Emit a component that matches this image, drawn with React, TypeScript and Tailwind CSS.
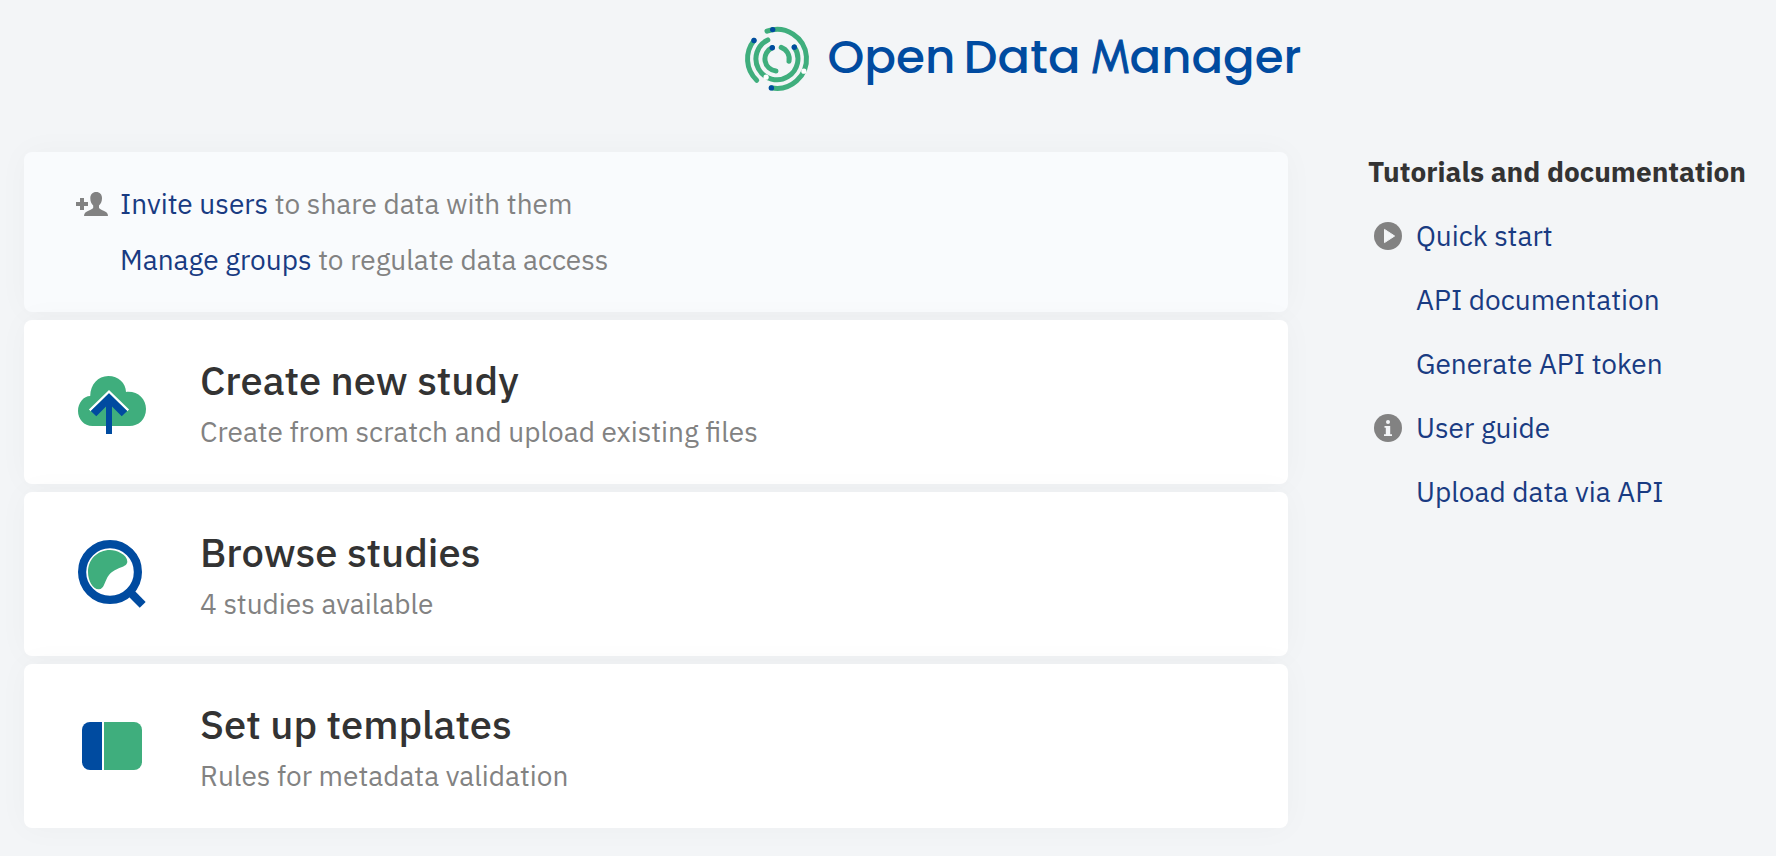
import type { ReactNode } from "react";

const arcs = [
  "M37 21.1A29.5 29.5 0 1 1 41.3 77.8",
  "M24 30.5A29.5 29.5 0 0 0 26.7 70.3",
  "M37.8 29.9A21 21 0 1 0 64.3 37",
  "M42.3 37.6A12.3 12.3 0 0 0 46 61.1",
  "M51.2 37.3A12.3 12.3 0 0 1 59 51.3",
];

function Logo() {
  return (
    <svg width="600" height="100" viewBox="0 0 600 100" aria-label="Open Data Manager">
      <g fill="none" stroke="#3fae7d" strokeWidth="5" strokeLinecap="round">
        {arcs.map((d) => (
          <path key={d} d={d} />
        ))}
      </g>
      <g fill="#004ba0">
        <circle cx="42.7" cy="19.6" r="2.7" />
        <circle cx="24" cy="30.5" r="2.7" />
        <circle cx="42.3" cy="37.7" r="2.7" />
        <circle cx="64.3" cy="37.2" r="2.7" />
        <circle cx="41.4" cy="77.9" r="2.7" />
      </g>
      <g fill="#fff">
        <circle cx="73.9" cy="61.2" r="2.6" />
        <circle cx="36.1" cy="67.2" r="2.6" />
      </g>
      <g className="font-['Poppins','Inter',sans-serif] text-[46px] font-medium" fill="#004ba0">
        <text x="97.5" y="62.5" textLength="128" lengthAdjust="spacingAndGlyphs">Open</text>
        <text x="233.5" y="62.5" textLength="117" lengthAdjust="spacingAndGlyphs">Data</text>
        <text y="62.5">
          <tspan
            className="font-['Urbanist','Inter',sans-serif] font-normal"
            x="360"
            textLength="41"
            lengthAdjust="spacingAndGlyphs"
            stroke="#004ba0"
            strokeWidth="1.1"
          >
            M
          </tspan>
          <tspan x="399.5" textLength="172" lengthAdjust="spacingAndGlyphs">anager</tspan>
        </text>
      </g>
    </svg>
  );
}

function AddUserIcon() {
  return (
    <svg width="44" height="56" viewBox="0 0 44 56" fill="#828282">
      <path d="M4 22h4v4h4v4H8v4H4v-4H0v-4h4z" />
      <path d="M20.200 16c3.600 0 5.800 2.400 5.800 6.200 0 3.400-1.500 6-3 7.300v2.300c.4 1 1.600 1.700 4 2.700 3 1.200 5 2.500 5 5.500H8c0-3 2-4.300 5-5.500 2.400-1 3.800-1.700 4.200-2.700v-2.300c-1.500-1.300-2.900-3.900-2.900-7.300 0-3.800 2.300-6.200 5.900-6.200z" />
    </svg>
  );
}

function CloudIcon() {
  return (
    <svg width="72" height="72" viewBox="16 22 72 72">
      <path fill="#3fae7d" d="M32.500 76C24 76 18 69.200 18 61s5.700-15 12.200-15c.2-11.500 7.800-20 18.100-20s17.500 7.200 17.700 15.900C77.500 40.700 86 48.500 86 59s-7.500 17-16.500 17z" />
      <path fill="none" stroke="#fff" strokeWidth="2.500" d="M29.800 60.400L49 41.700l19.200 18.700" />
      <path fill="#004ba0" d="M49 43.200l18.200 17.800-5.500 5.200L52 56.500V84h-6V56.500l-9.700 9.700-5.500-5.200z" />
    </svg>
  );
}

function BrowseIcon() {
  return (
    <svg className="overflow-visible" width="72" height="72" viewBox="16 24 72 72">
      <path stroke="#004ba0" strokeWidth="8.300" d="M69 71l13.700 13.800" />
      <circle cx="50" cy="52" r="27.900" fill="#fff" stroke="#004ba0" strokeWidth="8.200" />
      <path fill="#3fae7d" d="M50 30c6.500 0 17.300 4.500 17.300 11.500 0 6.500-11.300 5-18.300 13.500-4.300 5.200-4.500 14.300-10.200 14.300C32.500 69.300 28 60.500 28 52c0-12.500 9.500-22 22-22z" />
    </svg>
  );
}

function TemplateIcon() {
  return (
    <svg width="72" height="72" viewBox="16 16 72 72">
      <path fill="#004ba0" d="M42 22H30a8 8 0 0 0-8 8v32a8 8 0 0 0 8 8h12z" />
      <path fill="#3fae7d" d="M44 22h30a8 8 0 0 1 8 8v32a8 8 0 0 1-8 8H44z" />
    </svg>
  );
}

function PlayIcon() {
  return (
    <svg width="28" height="28" viewBox="0 0 28 28">
      <circle cx="14" cy="14" r="14" fill="#828282" />
      <path fill="#f3f5f7" stroke="#f3f5f7" strokeLinejoin="round" strokeWidth="1" d="M10.500 7.400v13.200L20.600 14z" />
    </svg>
  );
}

function InfoIcon() {
  return (
    <svg width="28" height="28" viewBox="0 0 28 28">
      <circle cx="14" cy="14" r="14" fill="#828282" />
      <g fill="#f3f5f7">
        <circle cx="14" cy="8" r="2" />
        <path d="M10.500 12h5.700v8.200H18V22h-8v-1.800h1.800v-6.400h-1.300z" />
      </g>
    </svg>
  );
}

function ActionCard({ icon, title, note }: { icon: ReactNode; title: string; note: string }) {
  return (
    <a className="flex h-[164px] rounded-lg bg-white pl-[52px] shadow-[0_0_32px_rgba(0,0,0,0.03)]">
      <span className="w-[124px] shrink-0 pt-[52px]">{icon}</span>
      <span className="flex flex-col pt-[34px]">
        <span className="text-[40px] leading-[52px] font-medium text-[#333]">{title}</span>
        <span className="mt-2 text-[28px] leading-9 text-[#828282]">{note}</span>
      </span>
    </a>
  );
}

const docs: { label: string; icon?: ReactNode }[] = [
  { label: "Quick start", icon: <PlayIcon /> },
  { label: "API documentation" },
  { label: "Generate API token" },
  { label: "User guide", icon: <InfoIcon /> },
  { label: "Upload data via API" },
];

export default function App() {
  return (
    <div className="flex h-[856px] w-[1776px] flex-col overflow-hidden bg-[#f3f5f7] font-['IBM_Plex_Sans',Roboto,sans-serif]">
      <header className="h-[140px] shrink-0 pt-[10px] pl-[730px]">
        <Logo />
      </header>
      <div className="flex">
        <main className="mt-3 ml-6 flex w-[1264px] shrink-0 flex-col gap-2">
          <section className="flex h-[160px] rounded-lg bg-[#f9fbfd] pt-6 pl-[52px] text-[28px] leading-[56px] text-[#828282] shadow-[0_0_32px_rgba(0,0,0,0.03)]">
            <AddUserIcon />
            <div>
              <p>
                <a className="text-[#193b82]">Invite users</a> to share data with them
              </p>
              <p>
                <a className="text-[#193b82]">Manage groups</a> to regulate data access
              </p>
            </div>
          </section>
          <ActionCard icon={<CloudIcon />} title="Create new study" note="Create from scratch and upload existing files" />
          <ActionCard icon={<BrowseIcon />} title="Browse studies" note="4 studies available" />
          <ActionCard icon={<TemplateIcon />} title="Set up templates" note="Rules for metadata validation" />
        </main>
        <aside className="ml-20 text-[28px] leading-[64px] whitespace-nowrap">
          <h2 className="font-bold text-[#333]">Tutorials and documentation</h2>
          <ul>
            {docs.map((doc) => (
              <li key={doc.label} className="flex items-center pl-[6px] text-[#193b82]">
                <span className="w-[42px]">{doc.icon}</span>
                <a>{doc.label}</a>
              </li>
            ))}
          </ul>
        </aside>
      </div>
    </div>
  );
}
